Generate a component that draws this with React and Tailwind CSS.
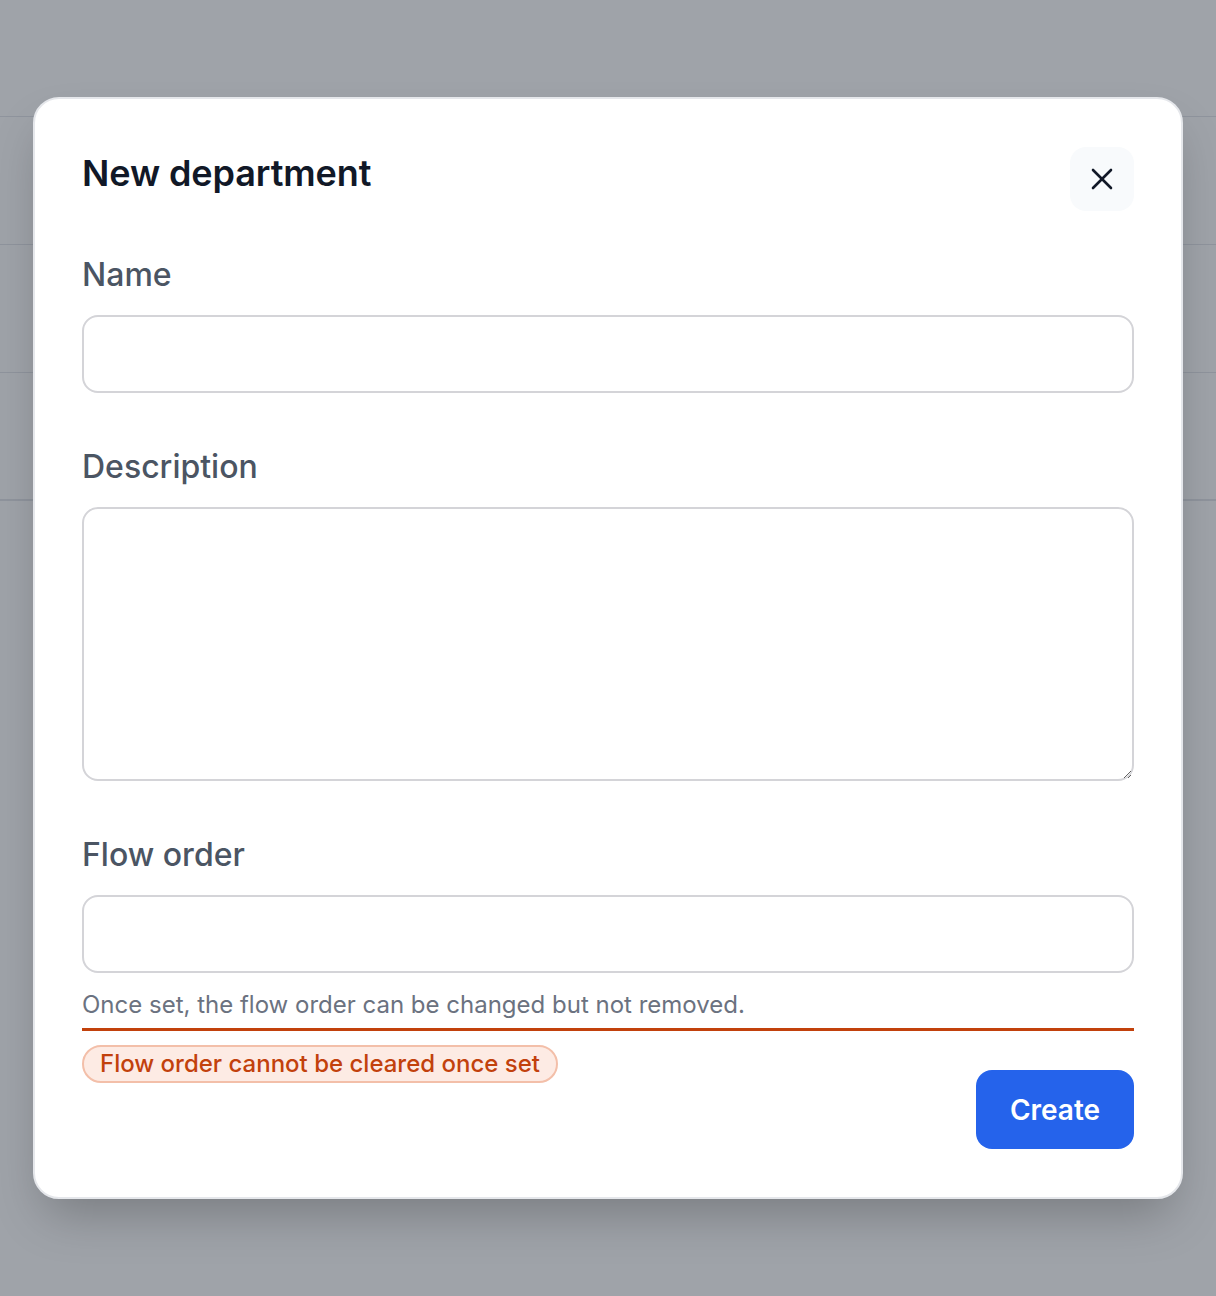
import React from 'react'

function CloseIcon() {
  return (
    <svg width="22" height="22" viewBox="0 0 22 22" fill="none" stroke="currentColor" strokeWidth="2.6" strokeLinecap="round">
      <path d="M2 2 L20 20" />
      <path d="M20 2 L2 20" />
    </svg>
  )
}

function Field({ label, children, gapTop }) {
  return (
    <div className={gapTop}>
      <label className="block text-[32px] leading-[40px] font-medium text-[#4b5563]">{label}</label>
      <div className="mt-[20px]">{children}</div>
    </div>
  )
}

export default function App() {
  return (
    <div className="relative min-h-[1296px] bg-white" style={{ fontFamily: 'Inter, "Noto Sans", sans-serif' }}>
      {/* page behind the dialog */}
      <div className="h-[117px] border-b border-gray-200"></div>
      <div className="h-[128px] border-b border-gray-200"></div>
      <div className="h-[128px] border-b border-gray-200"></div>
      <div className="h-[128px] border-b-2 border-gray-200"></div>

      {/* overlay */}
      <div className="absolute inset-0 bg-gray-900/40 flex items-center justify-center">
        <div className="w-[1150px] h-[1102px] bg-white rounded-[26px] border-2 border-gray-200 shadow-2xl px-[47px] pt-[47px]">
          <div className="flex items-start justify-between">
            <h2 className="text-[36px] leading-[54px] font-semibold text-[#111827] tracking-[-0.1px]">New department</h2>
            <button className="mt-px w-[64px] h-[64px] rounded-[16px] bg-[#f8fafc] flex items-center justify-center text-[#111827]">
              <CloseIcon />
            </button>
          </div>

          <Field label="Name" gapTop="mt-[44px]">
            <input className="block w-full h-[78px] rounded-[16px] border-2 border-[#d4d4d8] bg-white px-5 text-[28px] outline-none" />
          </Field>

          <Field label="Description" gapTop="mt-[54px]">
            <textarea className="block w-full h-[274px] rounded-[16px] border-2 border-[#d4d4d8] bg-white px-5 py-4 text-[28px] outline-none"></textarea>
          </Field>

          <Field label="Flow order" gapTop="mt-[54px]">
            <input className="block w-full h-[78px] rounded-[16px] border-2 border-[#d4d4d8] bg-white px-5 text-[28px] outline-none" />
          </Field>

          <div className="mt-[16px] pb-[7px] border-b-[3px] border-[#c2410c]">
            <p className="text-[24px] leading-[32px] text-[#6b7280]">Once set, the flow order can be changed but not removed.</p>
          </div>

          <div className="flex items-start justify-between mt-[14px]">
            <span className="inline-flex items-center h-[38px] px-[16px] rounded-full bg-[#fdebe4] border-2 border-[#f3bfa9] text-[#c2410c] text-[24px] font-medium">
              Flow order cannot be cleared once set
            </span>
            <button className="mt-[25px] w-[158px] h-[79px] rounded-[16px] bg-[#2563eb] text-white text-[28px] font-semibold">
              Create
            </button>
          </div>
        </div>
      </div>
    </div>
  )
}
